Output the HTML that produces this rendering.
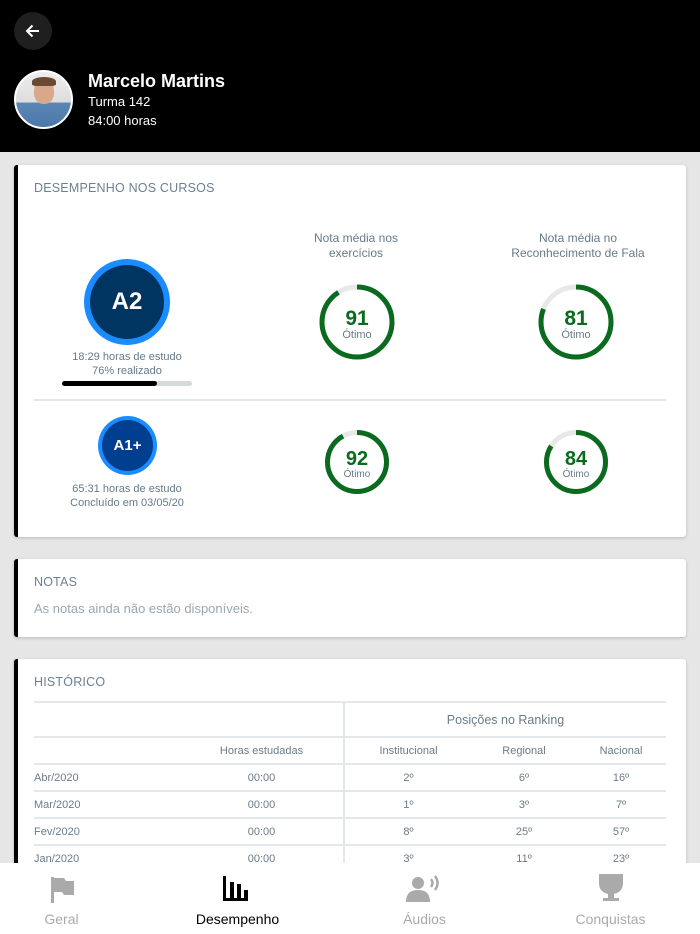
<!DOCTYPE html>
<html><head><meta charset="utf-8"><style>
*{margin:0;padding:0;box-sizing:border-box}
body{width:700px;height:934px;overflow:hidden;background:#e6e6e6;font-family:"Liberation Sans",sans-serif;position:relative;color:#667}
.hdr{position:absolute;left:0;top:0;width:700px;height:152px;background:#000}
.back{position:absolute;left:14px;top:12px;width:38px;height:38px;border-radius:50%;background:#1f1f1f}
.av{position:absolute;left:14px;top:70px;width:59px;height:59px;border-radius:50%;background:linear-gradient(180deg,#eee 0%,#ddd 55%,#5b87b5 56%,#4a78a8 100%);border:2px solid #fff;overflow:hidden}
.name{position:absolute;left:88px;top:71px;color:#fff;font-size:18px;font-weight:bold}
.sub{position:absolute;left:88px;color:#fff;font-size:13px}
.card{position:absolute;left:14px;width:672px;background:#fff;border-left:4px solid #000;border-radius:3px;box-shadow:0 1px 3px rgba(0,0,0,.2)}
.ttl{position:absolute;left:16px;font-size:12.5px;color:#6b8193;letter-spacing:.2px}
.c{position:absolute;text-align:center;font-size:11px;color:#667a88}
.lbl{position:absolute;text-align:center;font-size:12px;color:#667a88;line-height:15px}
.nav{position:absolute;left:0;top:863px;width:700px;height:71px;background:#fff}
.nl{position:absolute;top:48px;font-size:14px;color:#aaa;width:175px;text-align:center}
table{border-collapse:collapse;position:absolute;left:16px;top:42px;width:632px;font-size:11px;color:#6b7b88;table-layout:fixed}
td{border-top:2px solid #e3e8ec;text-align:center;height:27px}
.d{border-left:2px solid #e3e8ec}
</style></head><body>
<div class="hdr">
<div class="back"><svg width="38" height="38"><path d="M25 19H13M18.5 13.5L13 19l5.5 5.5" stroke="#fff" stroke-width="2" fill="none"/></svg></div>
<div class="av"><div style="position:absolute;left:18px;top:8px;width:20px;height:24px;border-radius:45%;background:#d9a88a"></div><div style="position:absolute;left:16px;top:5px;width:24px;height:9px;border-radius:50% 50% 20% 20%;background:#6b4a34"></div></div>
<div class="name">Marcelo Martins</div>
<div class="sub" style="top:94px">Turma 142</div>
<div class="sub" style="top:113px">84:00 horas</div>
</div>

<div class="card" style="top:165px;height:372px">
<div class="ttl" style="top:16px">DESEMPENHO NOS CURSOS</div>
<div style="position:absolute;left:66px;top:94px;width:86px;height:86px;border-radius:50%;background:#1a8cff;padding:6px"><div style="width:74px;height:74px;border-radius:50%;background:#003461;color:#fff;font-weight:bold;font-size:24px;text-align:center;line-height:74px">A2</div></div>
<div class="c" style="left:30px;width:158px;top:185px;line-height:14px">18:29 horas de estudo<br>76% realizado</div>
<div style="position:absolute;left:44px;top:216px;width:130px;height:5px;border-radius:3px;background:#d5dadd"><div style="width:95px;height:5px;border-radius:3px;background:#000"></div></div>
<div class="lbl" style="left:263px;width:150px;top:66px">Nota média nos<br>exercícios</div>
<div class="lbl" style="left:470px;width:180px;top:66px">Nota média no<br>Reconhecimento de Fala</div>
<svg style="position:absolute;left:0;top:0" width="668" height="372">
<g fill="none" stroke-width="5">
<circle cx="339" cy="157" r="35" stroke="#e8e8e8"/><circle cx="339" cy="157" r="35" stroke="#0a6a1d" stroke-dasharray="200 220" transform="rotate(-90 339 157)"/>
<circle cx="558" cy="157" r="35" stroke="#e8e8e8"/><circle cx="558" cy="157" r="35" stroke="#0a6a1d" stroke-dasharray="178 220" transform="rotate(-90 558 157)"/>
<circle cx="339" cy="297" r="29.5" stroke="#e8e8e8"/><circle cx="339" cy="297" r="29.5" stroke="#0a6a1d" stroke-dasharray="170.5 190" transform="rotate(-90 339 297)"/>
<circle cx="558" cy="297" r="29.5" stroke="#e8e8e8"/><circle cx="558" cy="297" r="29.5" stroke="#0a6a1d" stroke-dasharray="155.7 190" transform="rotate(-90 558 297)"/>
</g>
<g font-family="Liberation Sans,sans-serif" text-anchor="middle">
<text x="339" y="160" font-size="21" font-weight="bold" fill="#0a6a1d">91</text><text x="339" y="173" font-size="11" fill="#667a88">Ótimo</text>
<text x="558" y="160" font-size="21" font-weight="bold" fill="#0a6a1d">81</text><text x="558" y="173" font-size="11" fill="#667a88">Ótimo</text>
<text x="339" y="300" font-size="20" font-weight="bold" fill="#0a6a1d">92</text><text x="339" y="312" font-size="10" fill="#667a88">Ótimo</text>
<text x="558" y="300" font-size="20" font-weight="bold" fill="#0a6a1d">84</text><text x="558" y="312" font-size="10" fill="#667a88">Ótimo</text>
</g>
<line x1="16" y1="235" x2="648" y2="235" stroke="#e3e8ec" stroke-width="2"/>
</svg>
<div style="position:absolute;left:80px;top:251px;width:59px;height:59px;border-radius:50%;background:#1a8cff;padding:4px"><div style="width:51px;height:51px;border-radius:50%;background:#003f8f;color:#fff;font-weight:bold;font-size:15px;text-align:center;line-height:51px">A1+</div></div>
<div class="c" style="left:30px;width:158px;top:317px;line-height:14px">65:31 horas de estudo<br>Concluído em 03/05/20</div>
</div>

<div class="card" style="top:559px;height:78px">
<div class="ttl" style="top:16px">NOTAS</div>
<div style="position:absolute;left:16px;top:42px;font-size:13px;color:#9aa7b0">As notas ainda não estão disponíveis.</div>
</div>

<div class="card" style="top:659px;height:260px">
<div class="ttl" style="top:16px">HISTÓRICO</div>
<table>
<colgroup><col style="width:146px"><col style="width:164px"><col style="width:128px"><col style="width:104px"><col style="width:90px"></colgroup>
<tr><td colspan="2" style="height:35px"></td><td colspan="3" class="d" style="font-size:12.5px;height:35px">Posições no Ranking</td></tr>
<tr><td></td><td>Horas estudadas</td><td class="d">Institucional</td><td>Regional</td><td>Nacional</td></tr>
<tr><td style="text-align:left">Abr/2020</td><td>00:00</td><td class="d">2º</td><td>6º</td><td>16º</td></tr>
<tr><td style="text-align:left">Mar/2020</td><td>00:00</td><td class="d">1º</td><td>3º</td><td>7º</td></tr>
<tr><td style="text-align:left">Fev/2020</td><td>00:00</td><td class="d">8º</td><td>25º</td><td>57º</td></tr>
<tr><td style="text-align:left">Jan/2020</td><td>00:00</td><td class="d">3º</td><td>11º</td><td>23º</td></tr>
</table>
</div>

<div class="nav">
<svg style="position:absolute;left:50px;top:13px" width="26" height="28"><rect x="1" y="1" width="3" height="26" fill="#aaa"/><path d="M4 2h10l2 3h8v14H14l-2-3H4z" fill="#aaa"/></svg>
<svg style="position:absolute;left:222px;top:11px" width="32" height="28"><path d="M1 2h3v22h4V8h4v16h3V10h4v14h3V16h4v11H1z" fill="#000"/></svg>
<svg style="position:absolute;left:406px;top:10px" width="36" height="30"><circle cx="12" cy="10" r="6" fill="#aaa"/><path d="M0 29c0-9 5-12 12-12s12 3 12 12z" fill="#aaa"/><path d="M25 6q3 4 0 8M29 3q5 7 0 14" stroke="#aaa" stroke-width="2.5" fill="none"/></svg>
<svg style="position:absolute;left:596px;top:10px" width="30" height="30"><path d="M3 1h24v9q0 9-9 11v4h5v3H7v-3h5v-4Q3 19 3 10z" fill="#aaa"/></svg>
<div class="nl" style="left:-26px">Geral</div>
<div class="nl" style="left:150px;color:#000">Desempenho</div>
<div class="nl" style="left:337px">Áudios</div>
<div class="nl" style="left:523px">Conquistas</div>
</div>
</body></html>
